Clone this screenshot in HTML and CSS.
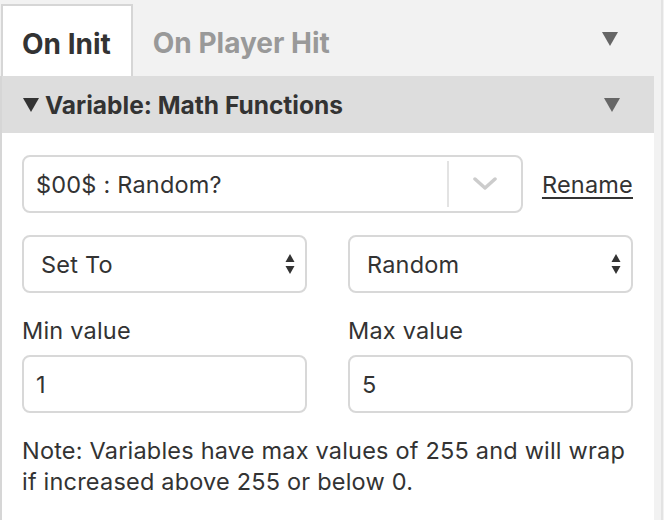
FILE: index.html
```html
<!DOCTYPE html>
<html lang="en">
<head>
  <meta charset="UTF-8" />
  <title>Script Editor</title>
  <link rel="stylesheet" href="styles.css">
</head>
<body>
  <div class="layout">
    <div class="sidebar">
      <div class="tabs">
        <div class="tab active">On Init</div>
        <div class="tab">On Player Hit</div>
        <svg class="tabs-menu" width="16" height="14" viewBox="0 0 16 14">
          <path d="M0 0 H16 L8 14 Z" fill="#666" />
        </svg>
      </div>

      <div class="event-header">
        <svg class="caret" width="16" height="14" viewBox="0 0 16 14">
          <path d="M0 0 H16 L8 14 Z" fill="#333" />
        </svg>
        <span class="event-title">Variable: Math Functions</span>
        <svg class="event-menu" width="16" height="14" viewBox="0 0 16 14">
          <path d="M0 0 H16 L8 14 Z" fill="#666" />
        </svg>
      </div>

      <div class="event-body">
        <div class="row">
          <div class="combo">
            <div class="combo-value">$00$ : Random?</div>
            <div class="combo-toggle">
              <svg width="24" height="14" viewBox="0 0 24 14">
                <path d="M2 2 L12 11 L22 2" fill="none" stroke="#cccccc" stroke-width="3.5" stroke-linecap="round" stroke-linejoin="round" />
              </svg>
            </div>
          </div>
          <a class="rename" href="#">Rename</a>
        </div>

        <div class="row cols">
          <div class="select">
            <span>Set To</span>
            <svg class="updown" width="10" height="22" viewBox="0 0 10 22">
              <path d="M5 1 L9.5 9 L0.5 9 Z M0.5 13 L9.5 13 L5 21 Z" fill="#333" />
            </svg>
          </div>
          <div class="select">
            <span>Random</span>
            <svg class="updown" width="10" height="22" viewBox="0 0 10 22">
              <path d="M5 1 L9.5 9 L0.5 9 Z M0.5 13 L9.5 13 L5 21 Z" fill="#333" />
            </svg>
          </div>
        </div>

        <div class="row cols">
          <label class="field">
            <span class="field-label">Min value</span>
            <input class="text-input" type="text" value="1">
          </label>
          <label class="field">
            <span class="field-label">Max value</span>
            <input class="text-input" type="text" value="5">
          </label>
        </div>

        <p class="note">Note: Variables have max values of 255 and will wrap if increased above 255 or below 0.</p>
      </div>
    </div>
    <div class="gutter"></div>
  </div>
</body>
</html>
```

FILE: styles.css
```css
body {
  margin: 0;
  background-color: #f2f2f2;
  color: #333;
  font-family: Inter, Roboto, sans-serif;
  font-size: 23.5px;
  letter-spacing: 0.2px;
}

.layout {
  display: flex;
  height: 520px;
}

.sidebar {
  width: 654px;
  display: flex;
  flex-direction: column;
}

.gutter {
  width: 7px;
  border-right: 2px solid #e3e3e3;
}

.tabs {
  display: flex;
  align-items: flex-end;
  height: 76px;
  padding-top: 4px;
  box-sizing: border-box;
}

.tab {
  height: 72px;
  box-sizing: border-box;
  padding: 5px 20px 0;
  display: flex;
  align-items: center;
  font-size: 28px;
  font-weight: 700;
  letter-spacing: 0;
  color: #999;
}

.tab.active {
  background-color: #fff;
  color: #333;
  border: 2px solid #d6d6d6;
  border-bottom: none;
  padding: 5px 20px 0 19px;
  margin-left: 1px;
}

.tabs-menu {
  margin-left: auto;
  margin-right: 36px;
  margin-bottom: 30px;
}

.event-header {
  display: flex;
  align-items: center;
  height: 57px;
  padding: 0 34px 0 21px;
  background-color: #dddddd;
  border-left: 2px solid #d6d6d6;
  font-size: 24.5px;
  font-weight: 700;
  letter-spacing: 0;
}

.caret {
  margin-right: 6px;
}

.event-menu {
  margin-left: auto;
}

.event-body {
  flex: 1;
  background-color: #fff;
  border-left: 2px solid #d6d6d6;
  padding: 22px 21px 0 20px;
}

.row {
  display: flex;
  align-items: center;
  margin-bottom: 22px;
}

.cols {
  gap: 41px;
}

.cols > * {
  flex: 1 1 0;
  min-width: 0;
}

.combo {
  width: 501px;
  height: 58px;
  box-sizing: border-box;
  border: 2px solid #d8d8d8;
  border-radius: 8px;
  display: flex;
  align-items: center;
}

.combo-value {
  flex: 1;
  padding-left: 12px;
}

.combo-toggle {
  width: 72px;
  height: 46px;
  border-left: 2px solid #e3e3e3;
  display: flex;
  align-items: center;
  justify-content: center;
}

.rename {
  margin-left: auto;
  color: #333;
  text-decoration-thickness: 2px;
  text-underline-offset: 4px;
}

.select {
  height: 58px;
  box-sizing: border-box;
  border: 2px solid #d8d8d8;
  border-radius: 8px;
  display: flex;
  align-items: center;
  justify-content: space-between;
  padding: 0 10px 0 17px;
}

.field {
  display: flex;
  flex-direction: column;
}

.field-label {
  line-height: 32px;
  margin-bottom: 8px;
}

.text-input {
  width: 100%;
  height: 58px;
  box-sizing: border-box;
  border: 2px solid #d8d8d8;
  border-radius: 8px;
  padding: 0 12px;
  font: inherit;
  color: #333;
  outline: none;
}

.note {
  margin: 0;
  line-height: 31px;
}
```
